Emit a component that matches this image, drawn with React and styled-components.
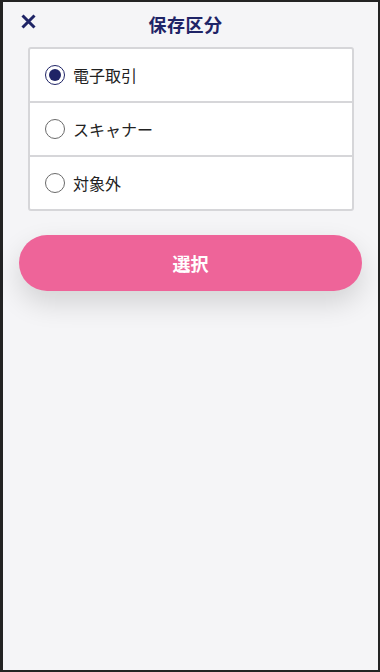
import React, { useState } from "react";
import styled, { createGlobalStyle } from "styled-components";

const Global = createGlobalStyle`
  html, body { margin: 0; padding: 0; background: #232323; }
  body { font-family: "Noto Sans CJK JP", "Noto Sans", sans-serif; }
  * { box-sizing: border-box; }
`;

const Screen = styled.div`
  width: 375px;
  height: 668px;
  margin: 2px 2px 2px 3px;
  background: #f5f5f7;
  display: flex;
  flex-direction: column;
`;

const Header = styled.div`
  position: relative;
  height: 45px;
  display: flex;
  align-items: flex-start;
  justify-content: center;
  padding-top: 9px;
  padding-right: 10px;
`;

const Title = styled.h1`
  margin: 0;
  font-size: 18px;
  font-weight: 700;
  color: #1f2466;
  line-height: 26px;
  letter-spacing: 0.5px;
`;

const CloseButton = styled.button`
  position: absolute;
  left: 16px;
  top: 10px;
  width: 18px;
  height: 18px;
  padding: 0;
  border: none;
  background: none;
  display: flex;
  align-items: center;
  justify-content: center;
`;

const Card = styled.div`
  margin: 0 24px 0 25px;
  background: #fff;
  border: 2px solid #d6d6d9;
  border-radius: 3px;
  display: flex;
  flex-direction: column;
`;

const Row = styled.label`
  height: ${(p) => (p.last ? "52px" : "54px")};
  display: flex;
  align-items: center;
  gap: 8px;
  padding-left: 15px;
  border-bottom: ${(p) => (p.last ? "none" : "2px solid #d6d6d9")};
  cursor: pointer;
`;

const Radio = styled.span`
  width: 20px;
  height: 20px;
  border-radius: 50%;
  border: 1.5px solid ${(p) => (p.checked ? "#1f2466" : "#6a6a6a")};
  display: flex;
  align-items: center;
  justify-content: center;
  &::after {
    content: "";
    width: 12px;
    height: 12px;
    border-radius: 50%;
    background: ${(p) => (p.checked ? "#1f2466" : "transparent")};
  }
`;

const RowText = styled.span`
  font-size: 16px;
  color: #222;
  line-height: 22px;
`;

const SelectButton = styled.button`
  margin: 24px 16px 0 16px;
  height: 56px;
  border: none;
  border-radius: 28px;
  background: #ee6499;
  color: #fff;
  font-family: "Noto Sans CJK JP", "Noto Sans", sans-serif;
  font-size: 18px;
  font-weight: 700;
  box-shadow: 0 12px 28px rgba(0, 0, 0, 0.14);
`;

const options = ["電子取引", "スキャナー", "対象外"];

export default function App() {
  const [sel, setSel] = useState(0);
  return (
    <>
      <Global />
      <Screen>
        <Header>
          <CloseButton aria-label="close">
            <svg width="17" height="17" viewBox="0 0 17 17">
              <path d="M2.5 2.5 L14.5 14.5 M14.5 2.5 L2.5 14.5" stroke="#1f2466" strokeWidth="3" strokeLinecap="butt" />
            </svg>
          </CloseButton>
          <Title>保存区分</Title>
        </Header>
        <Card>
          {options.map((o, i) => (
            <Row key={o} last={i === options.length - 1} onClick={() => setSel(i)}>
              <Radio checked={sel === i} />
              <RowText>{o}</RowText>
            </Row>
          ))}
        </Card>
        <SelectButton>選択</SelectButton>
      </Screen>
    </>
  );
}
